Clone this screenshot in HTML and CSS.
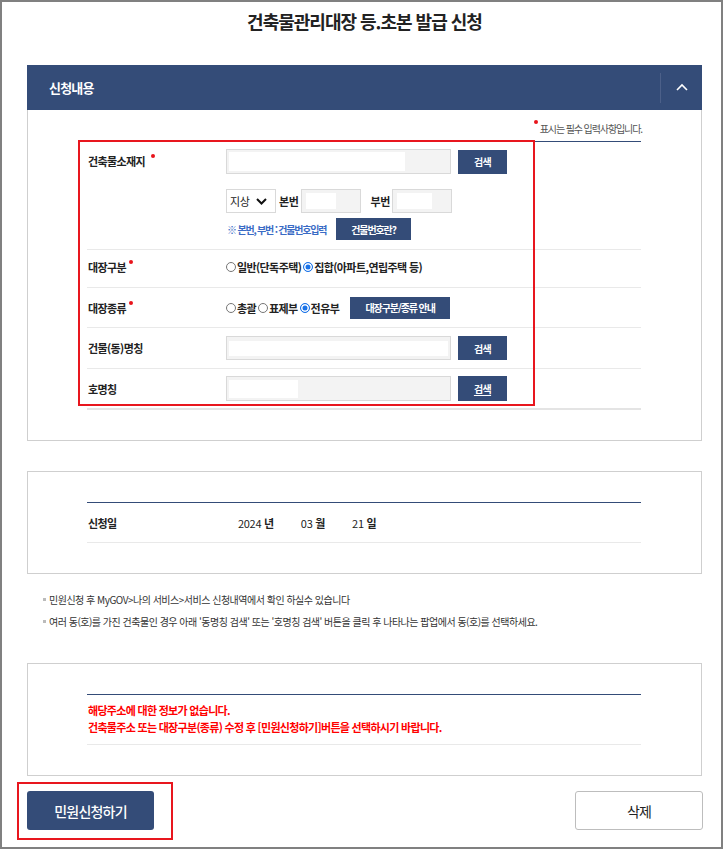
FILE: index.html
```html
<!DOCTYPE html>
<html lang="ko">
<head>
<meta charset="utf-8">
<title>건축물관리대장 등.초본 발급 신청</title>
<link rel="stylesheet" href="styles.css">
</head>
<body>
<div class="frame">
  <h1 class="title">건축물관리대장 등.초본 발급 신청</h1>

  <section class="panel">
    <div class="bar">
      <span class="bar-title">신청내용</span>
      <span class="bar-toggle">
        <svg width="12" height="8" viewBox="0 0 12 8"><polyline points="1,7 6,2 11,7" fill="none" stroke="#fff" stroke-width="1.6"/></svg>
      </span>
    </div>
    <div class="panel-body first">
      <p class="req-note"><span class="req"></span>표시는 필수 입력사항입니다.</p>
      <div class="form">
        <div class="row row-addr">
          <div class="label">건축물소재지<span class="req"></span></div>
          <div class="value stack">
            <div class="line">
              <div class="field f-wide"><span class="mask m-addr"></span></div>
              <button class="btn btn-search">검색</button>
            </div>
            <div class="line line-num">
              <div class="select">지상<svg width="11" height="7" viewBox="0 0 11 7"><polyline points="1,1 5.5,5.5 10,1" fill="none" stroke="#111" stroke-width="2"/></svg></div>
              <span class="num-label">본번</span>
              <div class="field f-num"><span class="mask m-num1"></span></div>
              <span class="num-label nl2">부번</span>
              <div class="field f-num"><span class="mask m-num2"></span></div>
            </div>
            <div class="line line-help">
              <span class="help">※ 본번, 부번 : 건물번호입력</span>
              <button class="btn btn-small">건물번호란?</button>
            </div>
          </div>
        </div>

        <div class="row row-r1">
          <div class="label">대장구분<span class="req r2"></span></div>
          <div class="value">
            <label class="radio"><input type="radio" name="kind">일반(단독주택)</label>
            <label class="radio"><input type="radio" name="kind" checked>집합(아파트,연립주택 등)</label>
          </div>
        </div>

        <div class="row row-r2">
          <div class="label">대장종류<span class="req r2"></span></div>
          <div class="value">
            <label class="radio"><input type="radio" name="type">총괄</label>
            <label class="radio"><input type="radio" name="type">표제부</label>
            <label class="radio"><input type="radio" name="type" checked>전유부</label>
            <button class="btn btn-guide">대장구분/종류 안내</button>
          </div>
        </div>

        <div class="row row-dong">
          <div class="label">건물(동)명칭</div>
          <div class="value">
            <div class="field f-wide f-dong"><span class="mask m-dong"></span></div>
            <button class="btn btn-search">검색</button>
          </div>
        </div>

        <div class="row row-ho">
          <div class="label">호명칭</div>
          <div class="value">
            <div class="field f-wide"><span class="mask m-ho"></span></div>
            <button class="btn btn-search btn-tall"><u>검색</u></button>
          </div>
        </div>
      </div>
      <div class="highlight hl-form"></div>
    </div>
  </section>

  <section class="panel boxed">
    <div class="panel-body">
      <div class="form">
        <div class="row row-date">
          <div class="label">신청일</div>
          <div class="value date">
            <span class="dpart"><span class="num">2024</span> <b>년</b></span>
            <span class="dpart"><span class="num">03</span> <b>월</b></span>
            <span class="dpart"><span class="num">21</span> <b>일</b></span>
          </div>
        </div>
      </div>
    </div>
  </section>

  <ul class="notes">
    <li>민원신청 후 MyGOV&gt;나의 서비스&gt;서비스 신청내역에서 확인 하실수 있습니다</li>
    <li>여러 동(호)를 가진 건축물인 경우 아래 '동명칭 검색' 또는 '호명칭 검색' 버튼을 클릭 후 나타나는 팝업에서 동(호)를 선택하세요.</li>
  </ul>

  <section class="panel boxed">
    <div class="panel-body">
      <div class="form msg">
        <p>해당주소에 대한 정보가 없습니다.</p>
        <p>건축물주소 또는 대장구분(종류) 수정 후 [민원신청하기]버튼을 선택하시기 바랍니다.</p>
      </div>
    </div>
  </section>

  <div class="actions">
    <button class="act act-primary">민원신청하기</button>
    <button class="act act-secondary">삭제</button>
    <div class="highlight hl-btn"></div>
  </div>
</div>
</body>
</html>
```

FILE: styles.css
```css
* { box-sizing: border-box; }
html, body { margin: 0; padding: 0; background: #fff; }
body {
  font-family: "Noto Sans CJK KR", "Noto Sans", sans-serif;
  color: #222;
}
.frame {
  width: 723px;
  height: 849px;
  border: 2px solid #808080;
  padding: 0 19px 0 25px;
  overflow: hidden;
}
.title {
  margin: 6px 0 31px;
  height: 26px;
  line-height: 26px;
  font-size: 18px;
  font-weight: 700;
  letter-spacing: -1px;
  text-align: center;
  color: #222;
}
.bar {
  height: 45px;
  background: #344c78;
  display: flex;
  align-items: center;
  justify-content: space-between;
  padding-left: 22px;
}
.bar-title {
  color: #fff;
  font-size: 13px;
  font-weight: 700;
  letter-spacing: -0.8px;
}
.bar-toggle {
  width: 42px;
  height: 30px;
  border-left: 1px solid #4c6089;
  display: flex;
  align-items: center;
  justify-content: center;
}
.bar-toggle svg { display: block; margin-top: -2px; }

.panel-body {
  position: relative;
  border: 1px solid #cfcfcf;
  padding: 0 60px 30px 59px;
}
.panel-body.first { border-top: 0; }
.boxed { margin-top: 30px; }
.boxed .panel-body { padding-top: 30px; }

.req-note {
  margin: 0 -1px 0 0;
  height: 31px;
  padding-top: 10px;
  line-height: 16px;
  text-align: right;
  font-size: 10px;
  color: #555;
  letter-spacing: -1.1px;
}
.req {
  display: inline-block;
  width: 4px;
  height: 4px;
  border-radius: 50%;
  background: #e8131b;
  vertical-align: 9px;
  margin-right: 2px;
}
.label .req { margin-left: 6px; margin-right: 0; vertical-align: 8px; }
.label .req.r2 { margin-left: 3px; }

.form { border-top: 1px solid #344c78; }

.row {
  display: grid;
  grid-template-columns: 139px 1fr;
  border-bottom: 1px solid #e9e9e9;
}
.label {
  padding-left: 1px;
  font-size: 11px;
  font-weight: 700;
  letter-spacing: -0.6px;
  color: #222;
  white-space: nowrap;
}
.value { display: flex; align-items: center; }
.row-addr { padding: 7px 0 9px; }
.row-addr .label { line-height: 25px; }
.stack { flex-direction: column; align-items: flex-start; }
.line { display: flex; align-items: center; }
.line-num { margin-top: 15px; height: 24px; }
.line-help { margin-top: 5px; height: 22px; }

.row-r1 { height: 38px; align-items: center; padding-bottom: 3px; }
.row-r2 { height: 40px; align-items: center; }
.row-dong { height: 41px; align-items: center; }
.row-ho { height: 41px; align-items: center; border-bottom: 2px solid #e4e4e4; }

.field {
  width: 225px;
  height: 25px;
  border: 1px solid #d9d9d9;
  background: #f3f3f3;
  display: flex;
  align-items: center;
  padding-left: 2px;
}
.f-dong { height: 24px; }
.mask { display: block; background: #fff; }
.m-addr { width: 176px; height: 19px; }
.m-dong { width: 219px; height: 15px; }
.m-ho { width: 69px; height: 18px; }
.f-num { width: 60px; height: 24px; padding-left: 4px; }
.m-num1 { width: 30px; height: 16px; }
.m-num2 { width: 35px; height: 16px; }

.btn {
  border: 0;
  margin: 0;
  padding: 0;
  background: #344c78;
  color: #fff;
  font-family: inherit;
  font-size: 10px;
  font-weight: 700;
  letter-spacing: -1.1px;
  cursor: pointer;
}
.btn-search { width: 49px; height: 24px; margin-left: 7px; letter-spacing: -0.6px; }
.btn-tall { height: 25px; }
.btn-search u { text-underline-offset: 2px; }
.btn-small { width: 75px; height: 22px; }
.btn-guide { width: 100px; height: 22px; margin-left: 9px; }

.select {
  width: 50px;
  height: 24px;
  border: 1px solid #d9d9d9;
  background: #fff;
  display: flex;
  align-items: center;
  padding-left: 3px;
  font-size: 11px;
  letter-spacing: -0.4px;
  color: #222;
}
.select svg { margin-left: 7px; }
.num-label {
  font-size: 11px;
  font-weight: 700;
  letter-spacing: -0.4px;
  margin: 0 3px;
  color: #222;
}
.num-label.nl2 { margin-left: 9px; margin-right: 2px; }
.help {
  width: 110px;
  padding-left: 1px;
  font-size: 10px;
  font-weight: 700;
  letter-spacing: -1.2px;
  color: #3a6bc5;
  white-space: nowrap;
}

.radio {
  display: inline-flex;
  align-items: center;
  font-size: 11px;
  font-weight: 700;
  letter-spacing: -0.6px;
  color: #222;
  margin-right: 2px;
  white-space: nowrap;
}
.radio input {
  -webkit-appearance: none;
  appearance: none;
  width: 10px;
  height: 10px;
  margin: 0 1px 0 0;
  border: 1px solid #767676;
  border-radius: 50%;
  background: #fff;
}
.radio input:checked {
  border-color: #1a73e8;
  background: #1a73e8;
  box-shadow: inset 0 0 0 1.5px #fff;
}

.highlight {
  position: absolute;
  border: 2px solid #e8161e;
  pointer-events: none;
}
.hl-form { left: 50px; top: 30px; width: 457px; height: 266px; }

.row-date {
  height: 40px;
  align-items: center;
  grid-template-columns: 151px 1fr;
}
.date { font-size: 11px; color: #222; }
.dpart { margin-right: 27px; letter-spacing: -0.3px; white-space: nowrap; }
.dpart b { font-weight: 700; }

.notes {
  list-style: none;
  margin: 15px 0 0;
  padding: 0 0 0 16px;
}
.notes li {
  position: relative;
  line-height: 22px;
  height: 22px;
  padding-left: 6px;
  font-size: 10px;
  color: #333;
  letter-spacing: -0.5px;
  white-space: nowrap;
}
.notes li::before {
  content: "";
  position: absolute;
  left: 0;
  top: 9px;
  width: 3px;
  height: 3px;
  background: #bbb;
}

.msg {
  border-bottom: 1px solid #e9e9e9;
  padding: 7px 0 8px 1px;
}
.msg p {
  margin: 0;
  line-height: 17px;
  font-size: 11px;
  font-weight: 700;
  color: #ff0000;
  letter-spacing: -0.7px;
  white-space: nowrap;
}

.actions {
  position: relative;
  margin-top: 15px;
  display: flex;
  justify-content: space-between;
}
.act {
  width: 127px;
  height: 39px;
  border-radius: 3px;
  font-family: inherit;
  font-size: 14px;
  letter-spacing: -0.8px;
  cursor: pointer;
}
.act-primary {
  background: #344c78;
  color: #fff;
  border: 0;
  font-weight: 500;
}
.act-secondary {
  background: #fff;
  color: #222;
  border: 1px solid #bdbdbd;
  margin-right: -1px;
  width: 128px;
}
.hl-btn { left: -10px; top: -9px; width: 156px; height: 58px; }
```
